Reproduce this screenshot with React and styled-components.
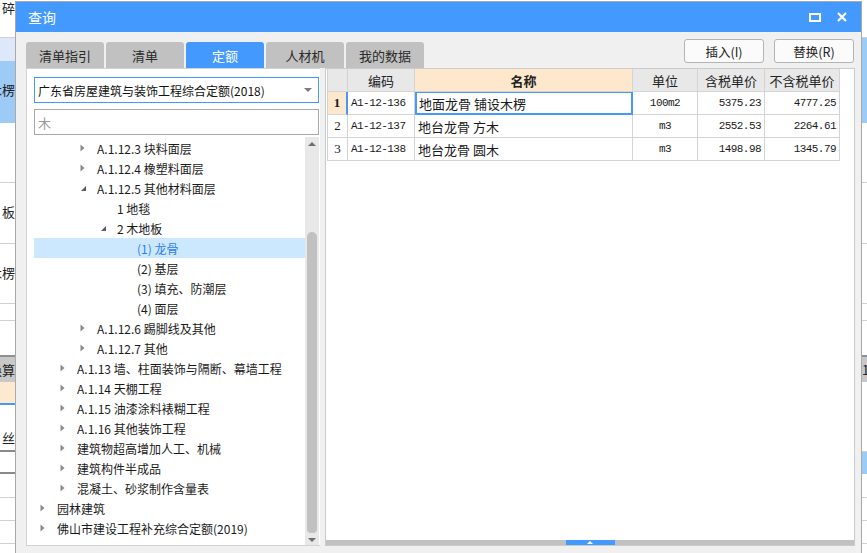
import React from "react";
import styled, { createGlobalStyle } from "styled-components";

const GlobalStyle = createGlobalStyle`
  html, body {
    margin: 0;
    padding: 0;
    background: #ffffff;
    overflow: hidden;
  }
  body {
    font-family: "Noto Sans CJK SC", "Noto Sans", sans-serif;
  }
`;

const BLUE = "#4499fe";

const Page = styled.div`
  display: flex;
  width: 867px;
  height: 553px;
  overflow: hidden;
`;

const Backdrop = styled.div`
  width: ${(p) => p.$w}px;
  flex: none;
  display: flex;
  flex-direction: column;
  background: #fff;
  overflow: hidden;
`;

const BackRow = styled.div`
  box-sizing: border-box;
  height: ${(p) => p.$h}px;
  flex: none;
  display: flex;
  justify-content: ${(p) => (p.$left ? "flex-start" : "flex-end")};
  align-items: flex-start;
  padding-top: ${(p) => p.$ty || 0}px;
  background: ${(p) => p.$bg || "#fff"};
  border-bottom: ${(p) => (p.$line === undefined ? 1 : p.$line)}px solid ${(p) => p.$lc || "#d0d0d0"};
  font-size: 13px;
  line-height: 16px;
  color: #222;
  white-space: nowrap;
  overflow: hidden;
`;

const Dialog = styled.div`
  width: 845px;
  margin-top: 1px;
  flex: none;
  border: 1px solid #a9a9a9;
  border-bottom: none;
  background: #f0f0f0;
  display: flex;
  flex-direction: column;
`;

const TitleBar = styled.div`
  height: 30px;
  background: ${BLUE};
  display: flex;
  align-items: center;
  padding: 0 6px 0 12px;
  color: #fff;
  font-size: 14px;
`;

const Title = styled.div`
  flex: 1;
`;

const TitleButton = styled.div`
  width: 27px;
  height: 30px;
  display: flex;
  align-items: center;
  justify-content: center;
`;

const Body = styled.div`
  flex: 1;
  display: flex;
  flex-direction: column;
  padding: 0 6px 7px 10px;
`;

const TopRow = styled.div`
  height: 36px;
  display: flex;
  align-items: flex-end;
`;

const Tabs = styled.div`
  display: flex;
  gap: 2px;
  flex: 1;
`;

const Tab = styled.div`
  width: 78px;
  height: 26px;
  border-radius: 3px 3px 0 0;
  background: ${(p) => (p.$active ? BLUE : "#c1c1c1")};
  color: ${(p) => (p.$active ? "#fff" : "#2a2a2a")};
  font-size: 13px;
  display: flex;
  align-items: center;
  justify-content: center;
`;

const Buttons = styled.div`
  display: flex;
  gap: 10px;
  margin-bottom: 5px;
  margin-right: 1px;
`;

const Button = styled.div`
  width: 78px;
  height: 22px;
  border: 1px solid #b4b4b4;
  border-radius: 3px;
  background: #fbfbfb;
  font-size: 12.5px;
  color: #222;
  display: flex;
  align-items: center;
  justify-content: center;
`;

const Content = styled.div`
  flex: 1;
  display: flex;
  gap: 5px;
  min-height: 0;
`;

const LeftPanel = styled.div`
  width: 285px;
  background: #fff;
  border: 1px solid #d2d2d2;
  border-right: none;
  padding: 8px 1px 0 7px;
  display: flex;
  flex-direction: column;
`;

const Select = styled.div`
  height: 24px;
  border: 1px solid ${BLUE};
  display: flex;
  align-items: center;
  padding: 0 6px 0 3px;
  font-size: 12px;
  color: #111;
`;

const SelectText = styled.div`
  flex: 1;
`;

const Caret = styled.div`
  width: 0;
  height: 0;
  border-left: 4px solid transparent;
  border-right: 4px solid transparent;
  border-top: 4px solid #7d7d7d;
`;

const Search = styled.div`
  height: 24px;
  margin-top: 6px;
  border: 1px solid #a9a9a9;
  display: flex;
  align-items: center;
  padding: 0 3px;
  font-size: 13px;
  color: #9a9a9a;
`;

const TreeArea = styled.div`
  flex: 1;
  margin-top: 2px;
  display: flex;
  min-height: 0;
`;

const TreeList = styled.div`
  flex: 1;
  display: flex;
  flex-direction: column;
  padding-top: 1px;
`;

const TreeRow = styled.div`
  height: 20px;
  flex: none;
  display: flex;
  align-items: center;
  padding-left: ${(p) => p.$level * 20}px;
  background: ${(p) => (p.$selected ? "#cce8ff" : "transparent")};
  color: ${(p) => (p.$selected ? "#2f7fe6" : "#1a1a1a")};
  font-size: 12px;
  white-space: nowrap;
`;

const Expander = styled.div`
  width: 23px;
  height: 20px;
  flex: none;
  display: flex;
  align-items: center;
  padding-left: 6px;
  box-sizing: border-box;
`;

const VScroll = styled.div`
  width: 14px;
  flex: none;
  background: #e8e8e8;
  display: flex;
  flex-direction: column;
  align-items: center;
  padding: 5px 0 3px;
`;

const Thumb = styled.div`
  width: 10px;
  flex: 1;
  margin: 86px 0 5px;
  border-radius: 5px 5px 4px 4px;
  background: #c1c1c1;
`;

const ScrollArrow = styled.div`
  width: 0;
  height: 0;
  border-left: 4px solid transparent;
  border-right: 4px solid transparent;
  ${(p) => (p.$down ? "border-top" : "border-bottom")}: 4px solid #6e6e6e;
`;

const RightPanel = styled.div`
  flex: 1;
  background: #fff;
  border: 1px solid #cbcbcb;
  display: flex;
  flex-direction: column;
  padding: 0 0 0 1px;
`;

const Table = styled.div`
  display: flex;
  flex-direction: column;
  width: 512px;
  border-left: 1px solid #d4d4d4;
`;

const Row = styled.div`
  display: flex;
  height: 23px;
`;

const Cell = styled.div`
  width: ${(p) => p.$w}px;
  flex: none;
  box-sizing: border-box;
  border-right: 1px solid #d4d4d4;
  border-bottom: 1px solid #d4d4d4;
  display: flex;
  align-items: center;
  justify-content: ${(p) =>
    p.$align === "right" ? "flex-end" : p.$align === "left" ? "flex-start" : "center"};
  padding: 0 3px;
  background: ${(p) => p.$bg || "#fff"};
  font-size: 13px;
  font-weight: ${(p) => (p.$bold ? 700 : 400)};
  color: #1a1a1a;
  white-space: nowrap;
  overflow: hidden;
`;

const HeadCell = styled(Cell)`
  background: ${(p) => p.$bg || "#e8e8e8"};
  color: #222;
`;

const RowHead = styled(Cell)`
  background: ${(p) => (p.$current ? "#fde8cd" : "#fff")};
  font-weight: ${(p) => (p.$current ? 700 : 400)};
  border-right: ${(p) => (p.$current ? `2px solid ${BLUE}` : "1px solid #d4d4d4")};
`;

const Mono = styled.span`
  font-family: "Liberation Mono", "DejaVu Sans Mono", monospace;
  font-size: 11px;
  letter-spacing: -0.55px;
`;

const NumHead = styled.span`
  font-family: "Liberation Serif", "Noto Sans CJK SC", serif;
  font-size: 13px;
`;

const SelCell = styled(Cell)`
  border: 2px solid ${BLUE};
  border-top: 1px solid ${BLUE};
  padding-left: 2px;
`;

const Spacer = styled.div`
  flex: 1;
`;

const HScroll = styled.div`
  height: 5px;
  background: #c1c1c1;
  display: flex;
  justify-content: center;
  margin-left: -1px;
`;

const HHandle = styled.div`
  width: 49px;
  background: ${BLUE};
  display: flex;
  justify-content: center;
  align-items: center;
`;

const HandleTip = styled.div`
  width: 0;
  height: 0;
  border-left: 3px solid transparent;
  border-right: 3px solid transparent;
  border-bottom: 3px solid #fff;
`;

function Arrow({ open }) {
  if (open) {
    return (
      <svg width="7" height="7" viewBox="0 0 7 7">
        <polygon points="6,1 6,6 1,6" fill="#5a5a5a" />
      </svg>
    );
  }
  return (
    <svg width="5" height="8" viewBox="0 0 5 8">
      <polygon points="0.5,0.5 4.5,4 0.5,7.5" fill="#8a8a8a" />
    </svg>
  );
}

const tree = [
  { level: 2, text: "A.1.12.3 块料面层", arrow: "closed" },
  { level: 2, text: "A.1.12.4 橡塑料面层", arrow: "closed" },
  { level: 2, text: "A.1.12.5 其他材料面层", arrow: "open" },
  { level: 3, text: "1 地毯" },
  { level: 3, text: "2 木地板", arrow: "open" },
  { level: 4, text: "(1) 龙骨", selected: true },
  { level: 4, text: "(2) 基层" },
  { level: 4, text: "(3) 填充、防潮层" },
  { level: 4, text: "(4) 面层" },
  { level: 2, text: "A.1.12.6 踢脚线及其他", arrow: "closed" },
  { level: 2, text: "A.1.12.7 其他", arrow: "closed" },
  { level: 1, text: "A.1.13 墙、柱面装饰与隔断、幕墙工程", arrow: "closed" },
  { level: 1, text: "A.1.14 天棚工程", arrow: "closed" },
  { level: 1, text: "A.1.15 油漆涂料裱糊工程", arrow: "closed" },
  { level: 1, text: "A.1.16 其他装饰工程", arrow: "closed" },
  { level: 1, text: "建筑物超高增加人工、机械", arrow: "closed" },
  { level: 1, text: "建筑构件半成品", arrow: "closed" },
  { level: 1, text: "混凝土、砂浆制作含量表", arrow: "closed" },
  { level: 0, text: "园林建筑", arrow: "closed" },
  { level: 0, text: "佛山市建设工程补充综合定额(2019)", arrow: "closed" },
];

const cols = [20, 67, 218, 65, 67, 75];

const rows = [
  ["1", "A1-12-136", "地面龙骨 铺设木楞", "100m2", "5375.23", "4777.25"],
  ["2", "A1-12-137", "地台龙骨 方木", "m3", "2552.53", "2264.61"],
  ["3", "A1-12-138", "地台龙骨 圆木", "m3", "1498.98", "1345.79"],
];

// the main window behind the dialog, seen at both edges
const leftBack = [
  { h: 38, t: "碎", ty: -2 },
  { h: 23, bg: "#dde8fb", line: 0 },
  { h: 62, bg: "#9ccbf6", t: "木楞", ty: 21, line: 0 },
  { h: 60 },
  { h: 61, t: "板", ty: 21 },
  { h: 60, t: "木楞", ty: 21 },
  { h: 17 },
  { h: 36, line: 2, lc: "#909090" },
  { h: 25, bg: "#c8c8c8", t: "换算", ty: 5, line: 0 },
  { h: 23, bg: "#fde9d0", line: 2, lc: BLUE },
  { h: 47, t: "丝", ty: 25, line: 2, lc: "#8a8a8a" },
  { h: 22, line: 2, lc: "#8a8a8a" },
  { h: 24 },
  { h: 23 },
  { h: 23 },
  { h: 23 },
];

const rightBack = [
  { h: 38 },
  { h: 85, bg: "#9ccbf6", line: 0 },
  { h: 60 },
  { h: 61 },
  { h: 60 },
  { h: 17 },
  { h: 36, line: 2, lc: "#909090" },
  { h: 25, bg: "#c8c8c8", t: "1", ty: 5, line: 0 },
  { h: 70 },
  { h: 22, bg: "#9ccbf6", line: 0 },
  { h: 24 },
  { h: 23 },
  { h: 23 },
  { h: 23 },
];

export default function App() {
  return (
    <>
      <GlobalStyle />
      <Page>
        <Backdrop $w={15}>
          {leftBack.map((r, i) => (
            <BackRow key={i} $h={r.h} $bg={r.bg} $line={r.line} $lc={r.lc} $ty={r.ty}>
              {r.t}
            </BackRow>
          ))}
        </Backdrop>
        <Dialog>
          <TitleBar>
            <Title>查询</Title>
            <TitleButton>
              <svg width="12" height="9" viewBox="0 0 12 9">
                <rect x="1" y="1" width="10" height="7" fill="none" stroke="#fff" strokeWidth="2" />
              </svg>
            </TitleButton>
            <TitleButton>
              <svg width="10" height="10" viewBox="0 0 10 10">
                <path d="M1 1 L9 9 M9 1 L1 9" stroke="#fff" strokeWidth="2.2" />
              </svg>
            </TitleButton>
          </TitleBar>
          <Body>
            <TopRow>
              <Tabs>
                <Tab>清单指引</Tab>
                <Tab>清单</Tab>
                <Tab $active>定额</Tab>
                <Tab>人材机</Tab>
                <Tab>我的数据</Tab>
              </Tabs>
              <Buttons>
                <Button>插入(I)</Button>
                <Button>替换(R)</Button>
              </Buttons>
            </TopRow>
            <Content>
              <LeftPanel>
                <Select>
                  <SelectText>广东省房屋建筑与装饰工程综合定额(2018)</SelectText>
                  <Caret />
                </Select>
                <Search>木</Search>
                <TreeArea>
                  <TreeList>
                    {tree.map((n, i) => (
                      <TreeRow key={i} $level={n.level} $selected={n.selected}>
                        <Expander>{n.arrow && <Arrow open={n.arrow === "open"} />}</Expander>
                        {n.text}
                      </TreeRow>
                    ))}
                  </TreeList>
                  <VScroll>
                    <ScrollArrow />
                    <Thumb />
                    <ScrollArrow $down />
                  </VScroll>
                </TreeArea>
              </LeftPanel>
              <RightPanel>
                <Table>
                  <Row>
                    <HeadCell $w={cols[0]} />
                    <HeadCell $w={cols[1]}>编码</HeadCell>
                    <HeadCell $w={cols[2]} $bg="#fde8cd" $bold>
                      名称
                    </HeadCell>
                    <HeadCell $w={cols[3]}>单位</HeadCell>
                    <HeadCell $w={cols[4]}>含税单价</HeadCell>
                    <HeadCell $w={cols[5]}>不含税单价</HeadCell>
                  </Row>
                  {rows.map((r, i) => {
                    const sel = i === 0;
                    const NameCell = sel ? SelCell : Cell;
                    return (
                      <Row key={i}>
                        <RowHead $w={cols[0]} $current={sel}>
                          <NumHead>{r[0]}</NumHead>
                        </RowHead>
                        <Cell $w={cols[1]} $align="left">
                          <Mono>{r[1]}</Mono>
                        </Cell>
                        <NameCell $w={cols[2]} $align="left">
                          {r[2]}
                        </NameCell>
                        <Cell $w={cols[3]}>
                          <Mono>{r[3]}</Mono>
                        </Cell>
                        <Cell $w={cols[4]} $align="right">
                          <Mono>{r[4]}</Mono>
                        </Cell>
                        <Cell $w={cols[5]} $align="right">
                          <Mono>{r[5]}</Mono>
                        </Cell>
                      </Row>
                    );
                  })}
                </Table>
                <Spacer />
                <HScroll>
                  <HHandle>
                    <HandleTip />
                  </HHandle>
                </HScroll>
              </RightPanel>
            </Content>
          </Body>
        </Dialog>
        <Backdrop $w={5}>
          {rightBack.map((r, i) => (
            <BackRow key={i} $h={r.h} $bg={r.bg} $line={r.line} $lc={r.lc} $ty={r.ty} $left>
              {r.t}
            </BackRow>
          ))}
        </Backdrop>
      </Page>
    </>
  );
}
